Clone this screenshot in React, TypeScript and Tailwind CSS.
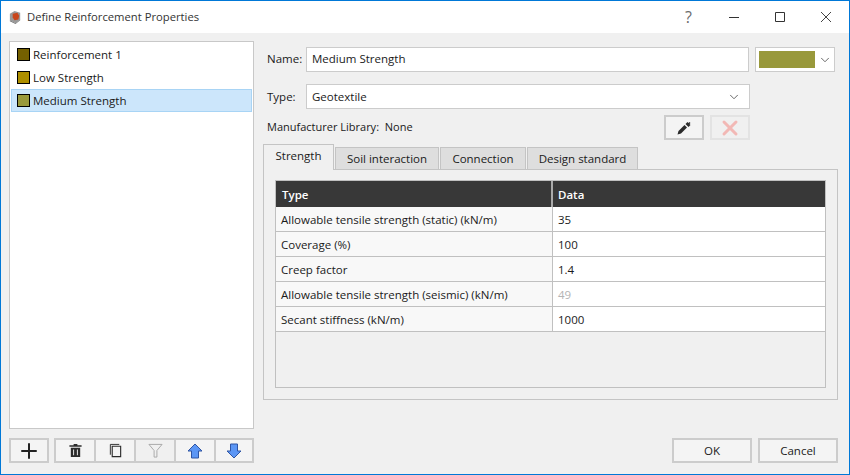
import { ChevronDown, Plus, X } from "lucide-react";
import type { ReactNode } from "react";

const font = { fontFamily: "'Open Sans', 'Noto Sans', sans-serif" };

const materials = [
  { name: "Reinforcement 1", color: "bg-[#756000]" },
  { name: "Low Strength", color: "bg-[#ad8f00]" },
  { name: "Medium Strength", color: "bg-[#99993b]", selected: true },
];

const rows = [
  { type: "Allowable tensile strength (static) (kN/m)", data: "35" },
  { type: "Coverage (%)", data: "100" },
  { type: "Creep factor", data: "1.4" },
  { type: "Allowable tensile strength (seismic) (kN/m)", data: "49", disabled: true },
  { type: "Secant stiffness (kN/m)", data: "1000" },
];

function ToolButton({ children, className = "" }: { children: ReactNode; className?: string }) {
  return (
    <div className={`flex h-[25px] w-10 shrink-0 items-center justify-center border-2 border-[#cccccc] ${className}`}>
      {children}
    </div>
  );
}

function Tab({ label, active, width }: { label: string; active?: boolean; width: string }) {
  return (
    <div
      className={
        active
          ? `${width} relative z-10 -mb-px flex h-[26px] items-center justify-center border border-b-0 border-[#c4c4c4] bg-[#f0f0f0] pb-[3px]`
          : `${width} flex h-[22px] items-center justify-center border border-b-0 border-[#c4c4c4] bg-[#dedede]`
      }
    >
      {label}
    </div>
  );
}

export default function App() {
  return (
    <div style={font} className="flex h-[475px] w-[850px] flex-col overflow-hidden border border-[#0078d7] bg-[#f0f0f0] text-[11.5px] text-[#1a1a1a]">
      <div className="flex h-8 shrink-0 items-center bg-white text-[#333333]">
        <svg viewBox="0 0 16 16" className="ml-[7px] h-[15px] w-[15px]">
          <path d="M2 4l5-3 6 2v7l-5 4-6-3z" fill="#9a9a9a" />
          <path d="M5 4l5-1 2 3-1 4-4 1-2-3z" fill="#c9461c" />
          <path d="M2 11l6 3 5-4v1l-5 4-6-3z" fill="#6d6d6d" />
        </svg>
        <span className="ml-[4px] text-[11.25px]">Define Reinforcement Properties</span>
        <div className="ml-auto flex items-center">
          <span className="mr-[37px] text-[16px] text-[#6b6b6b]">?</span>
          <svg viewBox="0 0 10 10" className="mr-9 h-[10px] w-[10px]" stroke="#333333" strokeWidth="1">
            <path d="M0 5.5h10" />
          </svg>
          <svg viewBox="0 0 10 10" className="mr-9 h-[10px] w-[10px]" fill="none" stroke="#333333" strokeWidth="1">
            <path d="M.5.5h9v9h-9z" />
          </svg>
          <svg viewBox="0 0 10 10" className="mr-[18px] h-[10px] w-[10px]" stroke="#444444" strokeWidth="1">
            <path d="M0 0l10 10M10 0L0 10" />
          </svg>
        </div>
      </div>

      <div className="flex min-h-0 flex-1 px-2 pt-2">
        {/* material list */}
        <div className="flex w-[245px] shrink-0 flex-col">
          <div className="h-[388px] border border-[#c8c8c8] bg-white p-[1px]">
            {materials.map((m) => (
              <div
                key={m.name}
                className={`flex h-[23px] items-center gap-[3px] border pl-[5px] ${
                  m.selected ? "border-[#a8d4f5] bg-[#cce6fb]" : "border-transparent"
                }`}
              >
                <span className={`h-[13px] w-[13px] border border-black ${m.color}`} />
                {m.name}
              </div>
            ))}
          </div>
          <div className="mt-[9px] flex">
            <ToolButton className="mr-[5px] bg-[#f4f4f4]">
              <Plus className="h-6 w-6 text-[#222222]" strokeWidth={2} />
            </ToolButton>
            <ToolButton className="border-r-0 bg-[#f4f4f4]">
              <svg viewBox="0 0 16 16" className="h-[15px] w-[15px]" fill="#2b2b2b">
                <path d="M6 1h4v1.5h4.5V4h-13V2.5H6zM3 5h10v10H3z" />
                <path d="M5.5 7h1v6h-1zM9.5 7h1v6h-1z" fill="#f4f4f4" />
              </svg>
            </ToolButton>
            <ToolButton className="border-r-0 bg-[#f4f4f4]">
              <svg viewBox="0 0 16 16" className="h-[15px] w-[15px]" fill="none" stroke="#2b2b2b" strokeWidth="1">
                <path d="M2.5 12.5V1.5H12" />
                <path d="M4.5 3.5h9v11h-9z" strokeWidth="1.2" />
              </svg>
            </ToolButton>
            <ToolButton className="border-r-0 bg-[#f0f0f0]">
              <svg viewBox="0 0 16 16" className="h-[15px] w-[15px]" fill="none" stroke="#a6a6a6" strokeWidth="1">
                <path d="M1 1.5h14L9.5 8v7h-3V8z" />
              </svg>
            </ToolButton>
            <ToolButton className="border-r-0 bg-[#f4f4f4]">
              <svg viewBox="0 0 16 16" className="h-4 w-4">
                <path d="M8 1l7 7h-3.5v7h-7V8H1z" fill="#5b96f5" stroke="#2f55a4" strokeWidth="1" />
              </svg>
            </ToolButton>
            <ToolButton className="bg-[#f4f4f4]">
              <svg viewBox="0 0 16 16" className="h-4 w-4">
                <path d="M8 15l7-7h-3.5V1h-7v7H1z" fill="#5b96f5" stroke="#2f55a4" strokeWidth="1" />
              </svg>
            </ToolButton>
          </div>
        </div>

        {/* properties */}
        <div className="ml-[9px] flex min-w-0 flex-1 flex-col">
          <div className="mt-[6px] flex h-[25px] items-center">
            <span className="ml-1 w-[39px] pb-px">Name:</span>
            <div className="flex h-[25px] w-[443px] items-center border border-[#cccccc] bg-white pb-px pl-[5px]">Medium Strength</div>
            <div className="ml-[6px] flex h-[25px] w-[80px] items-center border border-[#cccccc] bg-white pl-[3px]">
              <span className="h-[17px] w-14 bg-[#99993b]" />
              <ChevronDown className="ml-[3px] h-[14px] w-[14px] text-[#555555]" strokeWidth={1.5} />
            </div>
          </div>
          <div className="mt-3 flex h-[25px] items-center">
            <span className="ml-1 w-[39px]">Type:</span>
            <div className="flex h-[25px] w-[444px] items-center justify-between border border-[#cccccc] bg-white pr-2 pl-[5px]">
              Geotextile
              <ChevronDown className="h-[14px] w-[14px] text-[#555555]" strokeWidth={1.5} />
            </div>
          </div>
          <div className="mt-[6px] flex h-[25px] w-[487px] items-center justify-between">
            <span className="ml-1 text-[11px]">Manufacturer Library:&nbsp; None</span>
            <div className="flex gap-[6px]">
              <ToolButton className="bg-[#f4f4f4]">
                <svg viewBox="0 0 16 16" className="h-4 w-4" fill="#2b2b2b">
                  <path d="M1.5 14.5l1-3.5 6-6 2.5 2.5-6 6z" />
                  <path d="M9.5 4l2-2 1 1 1-1 1 1-1 1 1 1-2 2z" />
                </svg>
              </ToolButton>
              <ToolButton className="border-[#e3e3e3] bg-[#f0f0f0]">
                <X className="h-6 w-6 text-[#f2b8b5]" strokeWidth={3} />
              </ToolButton>
            </div>
          </div>

          <div className="mt-[3px] flex h-[26px] items-end gap-px">
            <Tab label="Strength" active width="w-[71px]" />
            <Tab label="Soil interaction" width="w-[104px]" />
            <Tab label="Connection" width="w-[86px]" />
            <Tab label="Design standard" width="w-[111px]" />
          </div>
          <div className="h-[231px] w-[575px] border border-[#c4c4c4] px-[11px] pt-[10px]">
            <div className="h-[208px] w-[551px] border border-[#c0c0c0] bg-[#f0f0f0]">
              <div className="flex h-[26px] bg-[#383838] pt-[2px] font-semibold text-white">
                <div className="-mt-[2px] flex w-[277px] items-center border-r-2 border-[#aaaaaa] pt-[2px] pl-[6px]">Type</div>
                <div className="flex flex-1 items-center pl-[5px]">Data</div>
              </div>
              {rows.map((r) => (
                <div key={r.type} className="flex h-[25px] border-b border-[#c0c0c0]">
                  <div className="flex w-[277px] items-center border-r border-[#c0c0c0] bg-[#f8f8f8] pt-px pl-[5px]">{r.type}</div>
                  <div className={`flex flex-1 items-center bg-white pt-px pl-[5px] ${r.disabled ? "text-[#b4b4b4]" : ""}`}>{r.data}</div>
                </div>
              ))}
            </div>
          </div>

          <div className="mt-[38px] ml-[409px] flex gap-[6px]">
            <ToolButton className="w-20 bg-[#f4f4f4]">OK</ToolButton>
            <ToolButton className="w-20 bg-[#f4f4f4]">Cancel</ToolButton>
          </div>
        </div>
      </div>
    </div>
  );
}
